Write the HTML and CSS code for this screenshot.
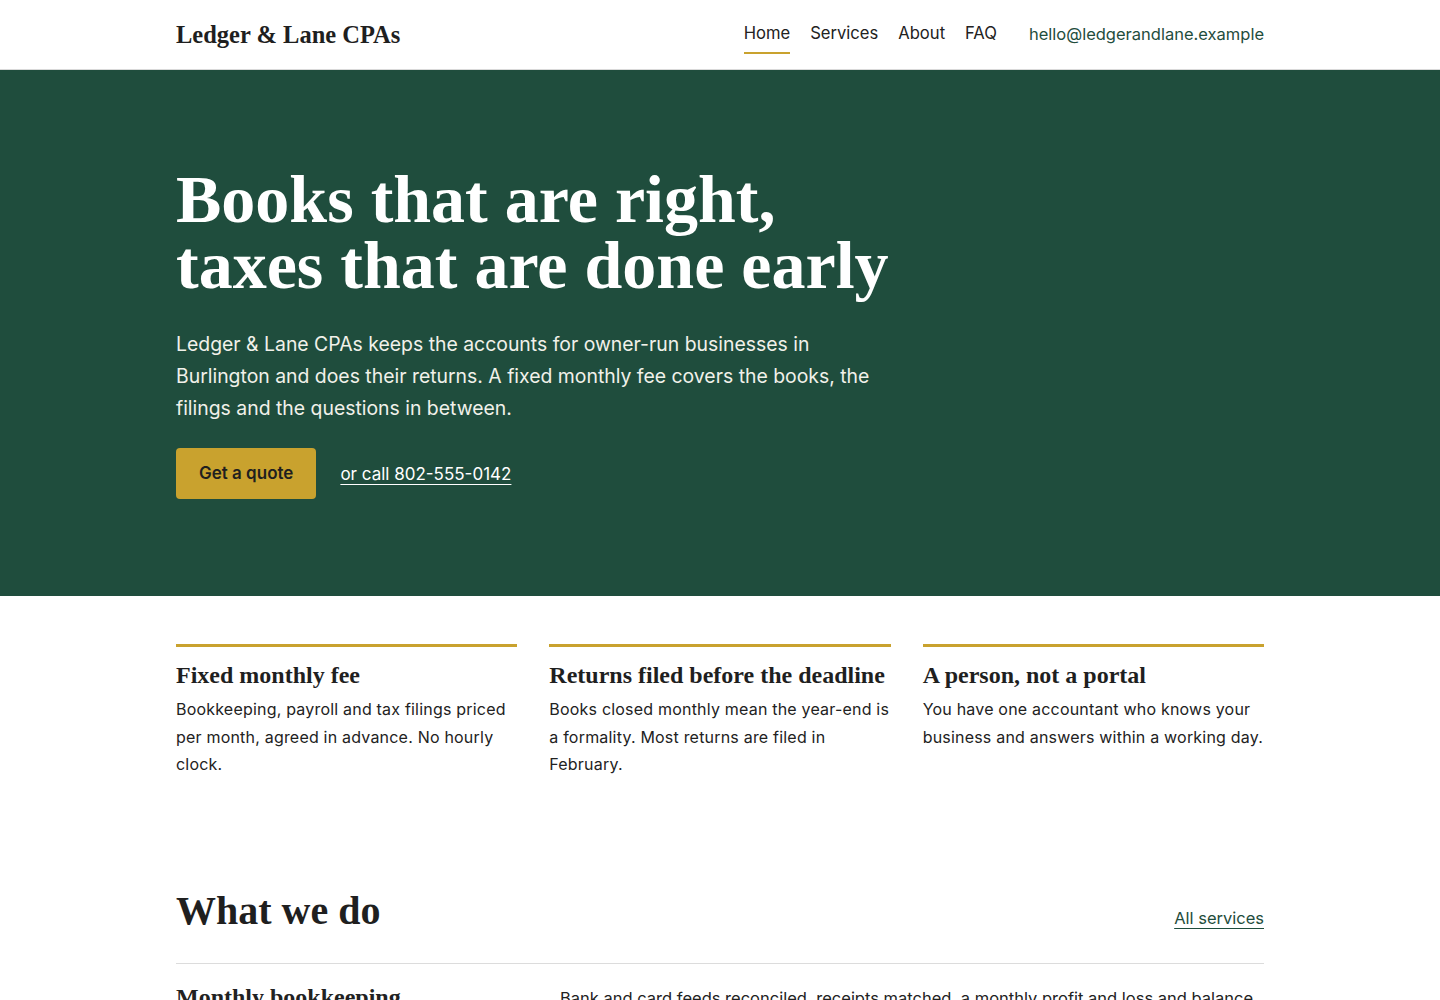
FILE: index.html
```html
<!DOCTYPE html>
<html lang="en">
<head>
    <meta charset="UTF-8">
    <meta name="viewport" content="width=device-width, initial-scale=1.0">
    <title>Ledger &amp; Lane CPAs</title>
    <link rel="stylesheet" href="styles.css">
</head>
<body>
    <header class="siteHeader">
        <div class="wrap headerRow">
            <a class="brand" href="#">Ledger &amp; Lane CPAs</a>
            <nav class="mainNav">
                <a class="navLink active" href="#">Home</a>
                <a class="navLink" href="#">Services</a>
                <a class="navLink" href="#">About</a>
                <a class="navLink" href="#">FAQ</a>
                <a class="navMail" href="#">hello@ledgerandlane.example</a>
            </nav>
        </div>
    </header>

    <section class="hero">
        <div class="wrap">
            <h1>Books that are right,<br>taxes that are done early</h1>
            <p class="lead">Ledger &amp; Lane CPAs keeps the accounts for owner-run businesses in Burlington and does their returns. A fixed monthly fee covers the books, the filings and the questions in between.</p>
            <div class="heroActions">
                <a class="btnQuote" href="#">Get a quote</a>
                <a class="callLink" href="#">or call 802-555-0142</a>
            </div>
        </div>
    </section>

    <section class="points">
        <div class="wrap pointGrid">
            <div class="point">
                <h3>Fixed monthly fee</h3>
                <p>Bookkeeping, payroll and tax filings priced per month, agreed in advance. No hourly clock.</p>
            </div>
            <div class="point">
                <h3>Returns filed before the deadline</h3>
                <p>Books closed monthly mean the year-end is a formality. Most returns are filed in February.</p>
            </div>
            <div class="point">
                <h3>A person, not a portal</h3>
                <p>You have one accountant who knows your business and answers within a working day.</p>
            </div>
        </div>
    </section>

    <section class="services">
        <div class="wrap">
            <div class="sectionHead">
                <h2>What we do</h2>
                <a class="allLink" href="#">All services</a>
            </div>
            <div class="serviceRow">
                <h3>Monthly bookkeeping</h3>
                <p>Bank and card feeds reconciled, receipts matched, a monthly profit and loss and balance sheet in your inbox by the tenth.</p>
            </div>
        </div>
    </section>
</body>
</html>
```

FILE: styles.css
```css
body {
    font-family: Inter, 'Noto Sans', sans-serif;
    color: #222;
    background-color: #ffffff;
    margin: 0;
    padding: 0;
}

a {
    color: inherit;
    text-decoration: none;
}

.wrap {
    width: 1088px;
    margin: 0 auto;
}

/* header */
.siteHeader {
    border-bottom: 1px solid #d9d9d9;
}

.headerRow {
    display: flex;
    justify-content: space-between;
    align-items: center;
    height: 69px;
}

.brand {
    font-family: 'Liberation Serif', serif;
    font-weight: bold;
    font-size: 24.5px;
    color: #1f1f1f;
}

.mainNav {
    display: flex;
    align-items: center;
    gap: 20px;
}

.navLink {
    font-size: 16.6px;
    color: #222;
    padding: 8px 0 9px;
    border-bottom: 2px solid transparent;
}

.navLink.active {
    border-bottom-color: #c9a22e;
}

.navMail {
    margin-left: 12px;
    font-size: 16.5px;
    color: #1f4d3d;
    padding-bottom: 1px;
}

/* hero */
.hero {
    background-color: #1f4d3d;
    color: #ffffff;
    padding: 96px 0 97px;
}

.hero h1 {
    font-family: 'Liberation Serif', serif;
    font-size: 68px;
    line-height: 66px;
    margin: 0 0 30px;
}

.lead {
    font-size: 19.4px;
    line-height: 32px;
    width: 720px;
    margin: 0 0 24px;
    color: #f1f1ea;
}

.heroActions {
    display: flex;
    align-items: center;
    gap: 24px;
}

.btnQuote {
    background-color: #c9a22e;
    color: #1f1f1f;
    font-weight: 600;
    font-size: 17px;
    padding: 15px 23px 16px;
    border-radius: 4px;
}

.callLink {
    font-size: 17px;
    text-decoration: underline;
    text-underline-offset: 4px;
}

/* points */
.points {
    padding: 48px 0 0;
}

.pointGrid {
    display: grid;
    grid-template-columns: 1fr 1fr 1fr;
    gap: 32px;
}

.point {
    border-top: 3px solid #c9a22e;
    padding-top: 13px;
}

.point h3 {
    font-family: 'Liberation Serif', serif;
    font-size: 24px;
    line-height: 30px;
    margin: 0 0 6px;
    color: #1f1f1f;
}

.point p {
    font-size: 16px;
    letter-spacing: 0.2px;
    line-height: 27.5px;
    margin: 0;
}

/* services */
.services {
    padding: 108px 0 40px;
}

.sectionHead {
    display: flex;
    justify-content: space-between;
    align-items: baseline;
    padding-bottom: 29px;
    border-bottom: 1px solid #dcdcdc;
}

.sectionHead h2 {
    font-family: 'Liberation Serif', serif;
    font-size: 40px;
    margin: 0;
    color: #1f1f1f;
}

.allLink {
    font-size: 16.5px;
    color: #1f4d3d;
    text-decoration: underline;
    text-underline-offset: 4px;
}

.serviceRow {
    display: grid;
    grid-template-columns: 384px 1fr;
    padding: 20px 0;
}

.serviceRow h3 {
    font-family: 'Liberation Serif', serif;
    font-size: 24px;
    margin: 0;
}

.serviceRow p {
    font-size: 16.5px;
    line-height: 28px;
    margin: 0;
}
```
